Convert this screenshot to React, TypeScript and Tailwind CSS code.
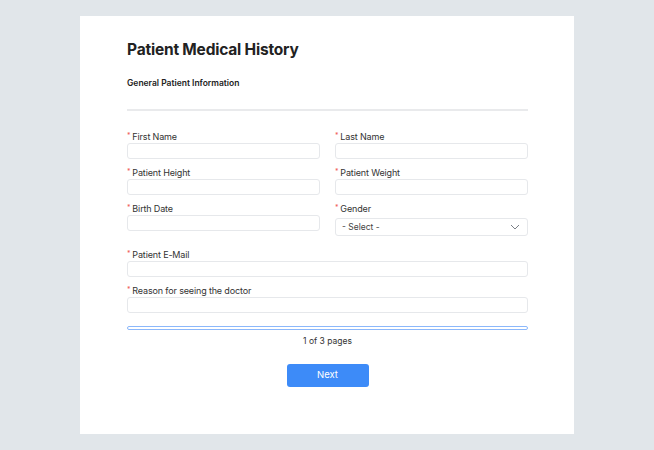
import React from "react";

const font = { fontFamily: "Inter, 'Noto Sans', sans-serif" };

function Label({ text }: { text: string }) {
  return (
    <div className="flex h-[12px] items-center text-[9px] leading-[12px] tracking-[-0.15px] text-[#333]">
      <span className="mr-[2px] -mt-[3px] text-[7px] text-[#ef5a5a]">*</span>
      {text}
    </div>
  );
}

function Field({ text, className = "" }: { text: string; className?: string }) {
  return (
    <div className={className}>
      <Label text={text} />
      <div className="h-[16px] rounded-[3px] border border-[#e6e8eb] bg-white" />
    </div>
  );
}

export default function App() {
  return (
    <div className="min-h-[450px] bg-[#e1e6ea] pt-[16px]" style={font}>
      <div className="mx-auto h-[418px] w-[494px] bg-white pl-[47px] pr-[46px]">
        <h1 className="pt-[22px] text-[15.5px] font-bold leading-[24px] tracking-[-0.2px] text-[#222]">
          Patient Medical History
        </h1>
        <div className="mt-[14px] text-[8.5px] font-semibold leading-[14px] text-[#222]">
          General Patient Information
        </div>
        <div className="mt-[19px] h-[2px] bg-[#e9eaec]" />

        <div className="mt-[20px] grid grid-cols-2 gap-x-[15px] gap-y-[8px]">
          <Field text="First Name" />
          <Field text="Last Name" />
          <Field text="Patient Height" />
          <Field text="Patient Weight" />
          <Field text="Birth Date" />
          <div>
            <Label text="Gender" />
            <div className="mt-[3px] flex h-[18px] items-center justify-between rounded-[3px] border border-[#e6e8eb] bg-white pl-[6px] pr-[7px] text-[8.5px] text-[#444]">
              <span>- Select -</span>
              <svg width="10" height="6" viewBox="0 0 10 6" fill="none">
                <path d="M1 1l4 4 4-4" stroke="#7b8087" strokeWidth="1" />
              </svg>
            </div>
          </div>
        </div>

        <Field text="Patient E-Mail" className="mt-[13px]" />
        <Field text="Reason for seeing the doctor" className="mt-[8px]" />

        <div className="mt-[13px] h-[4px] rounded-full border border-[#8cb8fb] bg-white" />
        <div className="mt-[3px] text-center text-[8.5px] leading-[16px] text-[#333]">
          1 of 3 pages
        </div>
        <div className="mt-[15px] flex justify-center">
          <button className="h-[23px] w-[82px] rounded-[3px] bg-[#3d8bf8] text-[9.5px] text-white">
            Next
          </button>
        </div>
      </div>
    </div>
  );
}
